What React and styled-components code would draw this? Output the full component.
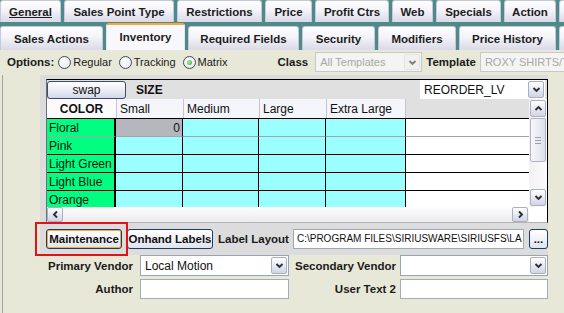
import React from "react";
import styled, { createGlobalStyle, css } from "styled-components";

const GlobalStyle = createGlobalStyle`
  html, body {
    margin: 0;
    padding: 0;
    background: #e8e8d9;
  }
  body {
    font-family: "Liberation Sans", Arial, sans-serif;
  }
  * { box-sizing: border-box; }
`;

const Screen = styled.div`
  position: relative;
  width: 564px;
  height: 313px;
  overflow: hidden;
  background: #e8e8d9;
  font-family: "Liberation Sans", Arial, sans-serif;
  color: #111;
`;

/* Tabs */
const TabStrip = styled.div`
  display: flex;
  align-items: flex-end;
  gap: 3px;
  height: ${(p) => p.$h}px;
  background: #4e8a8a;
  white-space: nowrap;
`;

const Tab = styled.div`
  flex: 0 0 ${(p) => p.$w}px;
  height: ${(p) => p.$h}px;
  display: flex;
  align-items: center;
  justify-content: center;
  font-size: 11.5px;
  font-weight: bold;
  color: #1c1c1c;
  border: 1px solid #c6cad6;
  border-bottom: none;
  border-radius: 3px 3px 0 0;
  background: linear-gradient(#ffffff, #f3f3f9 45%, #dadae8);
  overflow: hidden;
  ${(p) =>
    p.$underline &&
    css`
      text-decoration: underline;
    `}
  ${(p) =>
    p.$active &&
    css`
      background: #f9f9fd;
      border-top: 2px solid #f7aa2e;
      border-left-color: #e6e6ee;
      border-right-color: #e6e6ee;
      padding-bottom: 2px;
    `}
`;

/* Options row */
const OptionsRow = styled.div`
  display: flex;
  align-items: center;
  height: 24px;
  padding-left: 7px;
`;

const Label = styled.span`
  font-size: 11.5px;
  font-weight: bold;
  color: #1a1a1a;
  white-space: nowrap;
  margin-left: ${(p) => p.$ml || 0}px;
`;

const RadioGroup = styled.div`
  display: flex;
  align-items: center;
  gap: 7px;
  margin-left: 4px;
`;

const RadioOption = styled.label`
  display: flex;
  align-items: center;
  gap: 2px;
  font-size: 11px;
  color: #1a1a1a;
`;

const Radio = styled.span`
  position: relative;
  width: 13px;
  height: 13px;
  border-radius: 50%;
  border: 1px solid #3c4c5c;
  background: radial-gradient(circle at 40% 40%, #ffffff, #e4e4ea);
  ${(p) =>
    p.$checked &&
    css`
      &::after {
        content: "";
        position: absolute;
        left: 3px;
        top: 3px;
        width: 5px;
        height: 5px;
        border-radius: 50%;
        background: radial-gradient(circle at 40% 40%, #a6f0a0, #2faa30);
      }
    `}
`;

const DisabledSelect = styled.div`
  display: flex;
  align-items: center;
  justify-content: space-between;
  width: ${(p) => p.$w}px;
  height: 20px;
  margin-left: ${(p) => p.$ml || 0}px;
  padding: 0 1px 0 4px;
  border: 1px solid #c8c8c8;
  background: #f4f4f2;
  font-size: 11px;
  color: #a8a8a8;
  white-space: nowrap;
  overflow: hidden;
  flex-shrink: 0;
`;

const DisabledArrow = styled.span`
  display: flex;
  align-items: center;
  justify-content: center;
  width: 16px;
  height: 16px;
  border: 1px solid #d8d8d8;
  border-radius: 2px;
  background: #f0f0ee;
  opacity: 0.6;
`;

/* Body */
const Body = styled.div`
  margin-left: 2px;
  border-left: 1px solid #a4a4a0;
  height: 239px;
`;

const Panel = styled.div`
  margin: 1px 0 0 37px;
  width: 508px;
  padding: 4px 0 6px 6px;
  background: #dcdcdc;
`;

const Frame = styled.div`
  width: 502px;
  height: 144px;
  border-top: 1px solid #000;
  border-right: 1px solid #000;
  border-left: 1px solid #707070;
  border-bottom: 1px solid #b4b4b4;
  background: #e0e0e0;
`;

const TopBar = styled.div`
  display: flex;
  align-items: center;
  height: 19px;
  padding-right: 2px;
`;

const SwapButton = styled.div`
  display: flex;
  align-items: center;
  justify-content: center;
  width: 79px;
  height: 18px;
  border: 1px solid #3c4c6e;
  border-radius: 3px;
  background: linear-gradient(#ffffff, #eceef6 50%, #d4d8e8);
  font-size: 12px;
  color: #111;
`;

const SizeLabel = styled.span`
  margin-left: 10px;
  font-size: 12px;
  font-weight: bold;
`;

const Combo = styled.div`
  display: flex;
  align-items: center;
  justify-content: space-between;
  width: ${(p) => p.$w}px;
  height: ${(p) => p.$h || 21}px;
  margin-left: ${(p) => (p.$auto ? "auto" : "0")};
  padding: 0 1px 0 4px;
  background: #fff;
  border: ${(p) => (p.$bare ? "none" : "1px solid #98a4b4")};
  font-size: 12px;
  color: #111;
  white-space: nowrap;
`;

const ArrowButton = styled.span`
  display: flex;
  align-items: center;
  justify-content: center;
  flex-shrink: 0;
  width: ${(p) => p.$w || 16}px;
  height: ${(p) => p.$h || 17}px;
  border: 1px solid #a8b0c6;
  border-radius: 2px;
  background: linear-gradient(#ffffff, #e8eaf4 50%, #d0d4e4);
`;

const GridBody = styled.div`
  display: grid;
  grid-template-columns: 482px 18px;
  grid-template-rows: 108px 15px;
`;

const Table = styled.div`
  display: grid;
  grid-template-columns: 69px 67px 76px 67px 80px 1fr;
  grid-template-rows: 19px;
  grid-auto-rows: 18px;
  height: 108px;
  overflow: hidden;
  font-size: 12px;
`;

const HeadCell = styled.div`
  display: flex;
  align-items: center;
  padding-left: 3px;
  background: #f5f5fc;
  border-left: 1px solid #c4c4cc;
  ${(p) =>
    p.$kind === "color" &&
    css`
      justify-content: center;
      font-weight: bold;
      background: #fbfbff;
      border-left: none;
      padding-left: 0;
    `}
  ${(p) =>
    p.$kind === "last" &&
    css`
      border-right: 1px solid #c4c4cc;
    `}
  ${(p) =>
    p.$kind === "blank" &&
    css`
      background: #e0e0e0;
      border-left: none;
    `}
`;

const Cell = styled.div`
  display: flex;
  align-items: center;
  padding: 0 2px;
  border-top: 1px solid ${(p) => (p.$soft ? "#a4a4a8" : "#000")};
  background: #9cffff;
  border-right: 1px solid #000;
  ${(p) =>
    p.$kind === "color" &&
    css`
      background: #00ff80;
      border-right: 2px solid #000;
    `}
  ${(p) =>
    p.$kind === "selected" &&
    css`
      background: #b6b6be;
      justify-content: flex-end;
    `}
  ${(p) =>
    p.$kind === "blank" &&
    css`
      background: #fff;
      border-right: none;
    `}
`;

const VScroll = styled.div`
  display: flex;
  flex-direction: column;
  align-items: center;
  padding: 1px 0;
  background: linear-gradient(90deg, #f2f2f6, #fbfbfd);
`;

const Thumb = styled.div`
  display: flex;
  flex-direction: column;
  align-items: center;
  justify-content: center;
  gap: 2px;
  width: 16px;
  height: 44px;
  margin-top: 1px;
  border: 1px solid #b0b4c6;
  border-radius: 2px;
  background: linear-gradient(90deg, #f8f8fc, #dcdee9);
`;

const Grip = styled.span`
  width: 6px;
  height: 1px;
  background: #9a9eb0;
`;

const Spacer = styled.div`
  flex: 1;
`;

const HScroll = styled.div`
  display: flex;
  align-items: center;
  justify-content: space-between;
  padding: 0 1px 0 0;
  background: linear-gradient(#fdfdfd, #ebebef);
`;

const Corner = styled.div`
  background: #fff;
`;

const ButtonRow = styled.div`
  display: flex;
  align-items: center;
  gap: 5px;
  height: 20px;
  margin-top: 6px;
`;

const Button = styled.div`
  display: flex;
  align-items: center;
  justify-content: center;
  width: ${(p) => p.$w}px;
  height: 20px;
  border: 1px solid #1f3b68;
  border-radius: 3px;
  background: linear-gradient(#ffffff, #f2f3f8 50%, #dfe2ee);
  font-size: 11.5px;
  font-weight: bold;
  color: #111;
  white-space: nowrap;
  flex-shrink: 0;
  ${(p) =>
    p.$focused &&
    css`
      box-shadow: inset 0 0 0 1px #f5a834;
    `}
`;

const PathField = styled.div`
  width: 231px;
  height: 20px;
  margin-left: -1px;
  padding: 3px 0 0 3px;
  background: #fff;
  border: 1px solid #a0a8b8;
  font-size: 10px;
  white-space: nowrap;
  overflow: hidden;
`;

const FormGrid = styled.div`
  display: grid;
  grid-template-columns: 137px 149px 111px 148px;
  grid-template-rows: 21px 20px;
  row-gap: 3px;
  align-items: center;
`;

const FormLabel = styled.span`
  justify-self: end;
  padding-right: ${(p) => p.$pr}px;
  font-size: 11.5px;
  font-weight: bold;
  color: #1a1a1a;
  white-space: nowrap;
`;

const TextField = styled.div`
  height: 20px;
  background: #fff;
  border: 1px solid #a4acba;
`;

const Highlight = styled.div`
  position: absolute;
  left: 35px;
  top: 222px;
  width: 93px;
  height: 34px;
  border: 2px solid #e01414;
`;

const Chevron = ({ dir = "down" }) => {
  const d = {
    down: "M1.5 3 L4.5 6 L7.5 3",
    up: "M1.5 6 L4.5 3 L7.5 6",
    left: "M6 1.5 L3 4.5 L6 7.5",
    right: "M3 1.5 L6 4.5 L3 7.5",
  }[dir];
  return (
    <svg width="9" height="9" viewBox="0 0 9 9">
      <path d={d} fill="none" stroke="#2e2e36" strokeWidth="1.9" />
    </svg>
  );
};

const topTabs = [
  ["General", 61],
  ["Sales Point Type", 110],
  ["Restrictions", 85],
  ["Price", 47],
  ["Profit Ctrs", 74],
  ["Web", 41],
  ["Specials", 65],
  ["Action", 52],
  ["", 20],
];

const subTabs = [
  ["Sales Actions", 103],
  ["Inventory", 79],
  ["Required Fields", 111],
  ["Security", 73],
  ["Modifiers", 78],
  ["Price History", 97],
  ["", 20],
];

const colorRows = ["Floral", "Pink", "Light Green", "Light Blue", "Orange"];
const sizes = ["Small", "Medium", "Large", "Extra Large"];

const App = () => {
  return (
    <Screen>
      <GlobalStyle />
      <TabStrip $h={22}>
        {topTabs.map(([name, w], i) => (
          <Tab key={i} $w={w} $h={22} $underline={name === "General"}>
            {name}
          </Tab>
        ))}
      </TabStrip>
      <TabStrip $h={28}>
        {subTabs.map(([name, w], i) => (
          <Tab key={i} $w={w} $h={name === "Inventory" ? 27 : 24} $active={name === "Inventory"}>
            {name}
          </Tab>
        ))}
      </TabStrip>

      <OptionsRow>
        <Label>Options:</Label>
        <RadioGroup>
          <RadioOption>
            <Radio />
            Regular
          </RadioOption>
          <RadioOption>
            <Radio />
            Tracking
          </RadioOption>
          <RadioOption>
            <Radio $checked />
            Matrix
          </RadioOption>
        </RadioGroup>
        <Label $ml={50}>Class</Label>
        <DisabledSelect $w={107} $ml={7}>
          All Templates
          <DisabledArrow>
            <Chevron dir="down" />
          </DisabledArrow>
        </DisabledSelect>
        <Label $ml={4}>Template</Label>
        <DisabledSelect $w={100} $ml={4}>
          ROXY SHIRTS/T
        </DisabledSelect>
      </OptionsRow>

      <Body>
        <Panel>
          <Frame>
            <TopBar>
              <SwapButton>swap</SwapButton>
              <SizeLabel>SIZE</SizeLabel>
              <Combo $w={125} $h={19} $auto $bare>
                REORDER_LV
                <ArrowButton>
                  <Chevron dir="down" />
                </ArrowButton>
              </Combo>
            </TopBar>
            <GridBody>
              <Table>
                <HeadCell $kind="color">COLOR</HeadCell>
                {sizes.map((s, i) => (
                  <HeadCell key={s} $kind={i === sizes.length - 1 ? "last" : "size"}>
                    {s}
                  </HeadCell>
                ))}
                <HeadCell $kind="blank" />
                {colorRows.map((c, r) => (
                  <React.Fragment key={c}>
                    <Cell $kind="color" $soft={r === 1}>
                      {c}
                    </Cell>
                    {sizes.map((s, i) => (
                      <Cell key={s} $soft={r === 1} $kind={r === 0 && i === 0 ? "selected" : "value"}>
                        {r === 0 && i === 0 ? "0" : ""}
                      </Cell>
                    ))}
                    <Cell $kind="blank" $soft={r === 1} />
                  </React.Fragment>
                ))}
              </Table>
              <VScroll>
                <ArrowButton>
                  <Chevron dir="up" />
                </ArrowButton>
                <Thumb>
                  <Grip />
                  <Grip />
                  <Grip />
                </Thumb>
                <Spacer />
                <ArrowButton>
                  <Chevron dir="down" />
                </ArrowButton>
              </VScroll>
              <HScroll>
                <ArrowButton $h={15}>
                  <Chevron dir="left" />
                </ArrowButton>
                <ArrowButton $h={15}>
                  <Chevron dir="right" />
                </ArrowButton>
              </HScroll>
              <Corner />
            </GridBody>
          </Frame>

          <ButtonRow>
            <Button $w={76} $focused>
              Maintenance
            </Button>
            <Button $w={86}>Onhand Labels</Button>
            <Label>Label Layout</Label>
            <PathField>C:\PROGRAM FILES\SIRIUSWARE\SIRIUSFS\LA</PathField>
            <Button $w={19}>...</Button>
          </ButtonRow>
        </Panel>

        <FormGrid>
          <FormLabel $pr={7}>Primary Vendor</FormLabel>
          <Combo $w={149}>
            Local Motion
            <ArrowButton>
              <Chevron dir="down" />
            </ArrowButton>
          </Combo>
          <FormLabel $pr={4}>Secondary Vendor</FormLabel>
          <Combo $w={148}>
            <span />
            <ArrowButton>
              <Chevron dir="down" />
            </ArrowButton>
          </Combo>
          <FormLabel $pr={7}>Author</FormLabel>
          <TextField />
          <FormLabel $pr={4}>User Text 2</FormLabel>
          <TextField />
        </FormGrid>
      </Body>

      <Highlight />
    </Screen>
  );
};

export default App;
